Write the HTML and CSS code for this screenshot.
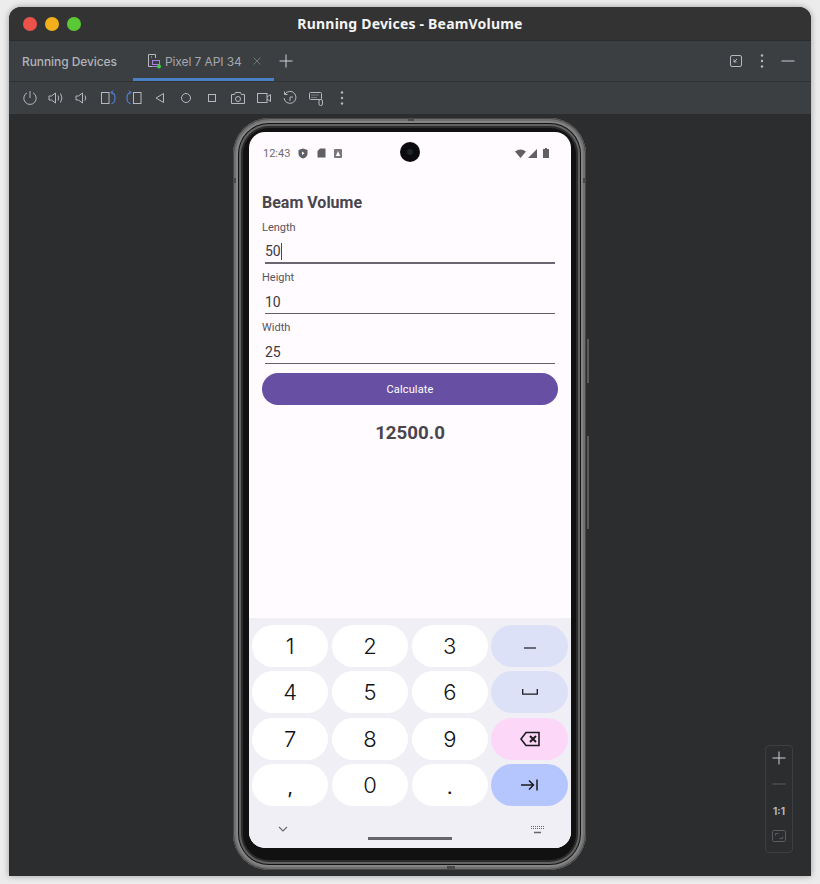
FILE: index.html
```html
<!DOCTYPE html>
<html lang="en">
<head>
    <meta charset="UTF-8">
    <title>Running Devices - BeamVolume</title>
    <link rel="stylesheet" href="styles.css">
</head>
<body>
    <div class="window">
        <header class="titlebar">
            <div class="lights">
                <span class="light red"></span>
                <span class="light yellow"></span>
                <span class="light green"></span>
            </div>
            <div class="title">Running Devices - BeamVolume</div>
        </header>

        <div class="tabbar">
            <span class="tool-name">Running Devices</span>
            <div class="tab">
                <svg width="16" height="16" viewBox="0 0 16 16" fill="none">
                    <path d="M6.500 13.500H2.500V1.500H9.500V5" stroke="#b4b8bf"/>
                    <path d="M5 4h1" stroke="#b4b8bf"/>
                    <rect x="6.500" y="7.500" width="7" height="4" stroke="#a97fe0"/>
                    <path d="M6 13.500h5" stroke="#a97fe0"/>
                    <circle cx="13" cy="13.500" r="2" fill="#3cd23c"/>
                </svg>
                <span class="tab-label">Pixel 7 API 34</span>
                <svg class="tab-close" width="8" height="8" viewBox="0 0 8 8" fill="none">
                    <path d="M0.500 0.500l7 7M7.500 0.500l-7 7" stroke="#6f737a"/>
                </svg>
            </div>
            <svg class="tab-add" width="14" height="14" viewBox="0 0 14 14" fill="none">
                <path d="M7 0.500v13M0.500 7h13" stroke="#ced0d6"/>
            </svg>
            <div class="tab-actions">
                <svg width="14" height="14" viewBox="0 0 14 14" fill="none">
                    <rect x="1.500" y="1.500" width="11" height="11" rx="1.500" stroke="#b4b8bf"/>
                    <path d="M8 5L5 8M5 5.500V8H7.500" stroke="#b4b8bf"/>
                </svg>
                <svg width="14" height="14" viewBox="0 0 14 14" fill="#b4b8bf">
                    <circle cx="7" cy="1.500" r="1.200"/><circle cx="7" cy="7" r="1.200"/><circle cx="7" cy="12.500" r="1.200"/>
                </svg>
                <svg width="14" height="14" viewBox="0 0 14 14" fill="none">
                    <path d="M0.500 7h13" stroke="#9a9ea5" stroke-width="1.300"/>
                </svg>
            </div>
        </div>

        <div class="toolbar">
            <svg width="16" height="16" viewBox="0 0 16 16" fill="none" stroke="#b4b8bf"><path d="M5 2.800a6.200 6.200 0 1 0 6 0M8 1v7"/></svg>
            <svg width="16" height="16" viewBox="0 0 16 16" fill="none" stroke="#b4b8bf"><path d="M1 6h2.500L7.500 3v10L3.500 10H1zM10 5.500q1.500 2.500 0 5M12.500 3.500q3 4.500 0 9"/></svg>
            <svg width="16" height="16" viewBox="0 0 16 16" fill="none" stroke="#b4b8bf"><path d="M2 6h2.500L8.500 3v10L4.500 10H2zM11 5.500q1.500 2.500 0 5"/></svg>
            <svg width="16" height="16" viewBox="0 0 16 16" fill="none"><rect x="1.500" y="2.500" width="7.500" height="11" stroke="#b4b8bf"/><path d="M11.500 2.500c2.500 0 3.500 2.300 3.500 5.500s-1 5.500-3.500 5.500" stroke="#548af7"/><path d="M13 0.500l-2 2 2 2" stroke="#548af7"/></svg>
            <svg width="16" height="16" viewBox="0 0 16 16" fill="none"><rect x="7.500" y="2.500" width="7.500" height="11" stroke="#b4b8bf"/><path d="M4.500 2.500c-2.500 0-3.500 2.300-3.500 5.500s1 5.500 3.500 5.500" stroke="#548af7"/><path d="M3 0.500l2 2-2 2" stroke="#548af7"/></svg>
            <svg width="16" height="16" viewBox="0 0 16 16" fill="none" stroke="#b4b8bf"><path d="M11.500 3.500v9L4 8z"/></svg>
            <svg width="16" height="16" viewBox="0 0 16 16" fill="none" stroke="#b4b8bf"><circle cx="8" cy="8" r="4.500"/></svg>
            <svg width="16" height="16" viewBox="0 0 16 16" fill="none" stroke="#b4b8bf"><rect x="4.500" y="4.500" width="7" height="7"/></svg>
            <svg width="16" height="16" viewBox="0 0 16 16" fill="none" stroke="#b4b8bf"><path d="M1.500 4.500h3l1-2h5l1 2h3v9h-13z"/><circle cx="8" cy="9" r="2.500"/></svg>
            <svg width="16" height="16" viewBox="0 0 16 16" fill="none" stroke="#b4b8bf"><rect x="1.500" y="3.500" width="9.500" height="9"/><path d="M11 7l3.500-2.500v7L11 9"/></svg>
            <svg width="16" height="16" viewBox="0 0 16 16" fill="none" stroke="#b4b8bf"><path d="M3 4a6 6 0 1 1-1 4M2.500 1.500V4.500H5.500M8 11V7h3"/></svg>
            <svg width="16" height="16" viewBox="0 0 16 16" fill="none" stroke="#b4b8bf"><rect x="1.500" y="2.500" width="12" height="7" rx="1"/><path d="M3.500 5h8M3.500 7.500h5" stroke-dasharray="1 1"/><rect x="11" y="9.500" width="3.500" height="6" rx="1.500"/></svg>
            <svg width="16" height="16" viewBox="0 0 16 16" fill="#b4b8bf"><circle cx="8" cy="2.500" r="1.200"/><circle cx="8" cy="8" r="1.200"/><circle cx="8" cy="13.500" r="1.200"/></svg>
        </div>

        <main class="canvas">
            <div class="phone">
                <span class="rocker rocker-power"></span>
                <span class="rocker rocker-volume"></span>
                <span class="notch notch-top"></span>
                <span class="notch notch-bottom"></span>
                <span class="notch notch-left"></span>
                <span class="notch notch-right"></span>
                <div class="screen">
                    <div class="statusbar">
                        <div class="status-left">
                            <span class="clock">12:43</span>
                            <svg width="10" height="11" viewBox="0 0 10 11"><path d="M5 0.500l4.500 1.500v3.500q0 3.500-4.500 5-4.500-1.500-4.500-5V2z" fill="#5f5f64"/><path d="M4 3.500l2.500 1.700L4 7z" fill="#fff"/></svg>
                            <svg width="9" height="10" viewBox="0 0 9 10"><path d="M3 0.500h5.500v9H0.500V3z" fill="#5f5f64"/></svg>
                            <svg width="8" height="9" viewBox="0 0 8 9"><rect width="8" height="9" rx="1" fill="#77777c"/><path d="M4 2l2.200 5H1.800z" fill="#fff"/></svg>
                        </div>
                        <span class="camera"><span class="lens"></span></span>
                        <div class="status-right">
                            <svg width="11" height="9" viewBox="0 0 11 9"><path d="M0 2.500Q5.500-1.500 11 2.500L5.500 9z" fill="#5f5f64"/></svg>
                            <svg class="signal" width="9" height="9" viewBox="0 0 9 9"><path d="M9 0v9H0z" fill="#5f5f64"/></svg>
                            <svg width="6" height="10" viewBox="0 0 6 10"><path d="M2 0h2v1h2v9H0V1h2z" fill="#5f5f64"/></svg>
                        </div>
                    </div>

                    <div class="app">
                        <h1 class="app-title">Beam Volume</h1>

                        <label class="field-label">Length</label>
                        <div class="field field-active"><span>50</span><span class="caret"></span></div>

                        <label class="field-label">Height</label>
                        <div class="field"><span>10</span></div>

                        <label class="field-label">Width</label>
                        <div class="field"><span>25</span></div>

                        <button class="calc-btn">Calculate</button>
                        <p class="result">12500.0</p>
                    </div>

                    <div class="keyboard">
                        <div class="keys">
                            <div class="key">1</div>
                            <div class="key">2</div>
                            <div class="key">3</div>
                            <div class="key key-blue">
                                <svg class="dash" width="12" height="2" viewBox="0 0 12 2"><path d="M0 1h12" stroke="#1c1b1f" stroke-width="1.200"/></svg>
                            </div>
                            <div class="key">4</div>
                            <div class="key">5</div>
                            <div class="key">6</div>
                            <div class="key key-blue">
                                <svg width="16" height="6" viewBox="0 0 16 6" fill="none"><path d="M0.700 0v5.200h14.600V0" stroke="#1c1b1f" stroke-width="1.300"/></svg>
                            </div>
                            <div class="key">7</div>
                            <div class="key">8</div>
                            <div class="key">9</div>
                            <div class="key key-pink">
                                <svg width="20" height="16" viewBox="0 0 20 16" fill="none" stroke="#1c1b1f" stroke-width="1.600"><path d="M6 1.500h13v13H6L1 8z"/><path d="M10 5l6 6M16 5l-6 6" stroke-width="2"/></svg>
                            </div>
                            <div class="key key-low">,</div>
                            <div class="key">0</div>
                            <div class="key key-low">.</div>
                            <div class="key key-indigo">
                                <svg width="17" height="12" viewBox="0 0 17 12" fill="none" stroke="#1c1b1f" stroke-width="1.500"><path d="M0 6h12.500M8 1.500L12.500 6 8 10.500M16 0.500v11"/></svg>
                            </div>
                        </div>
                        <div class="kb-nav">
                            <svg width="10" height="6" viewBox="0 0 10 6" fill="none"><path d="M1 1l4 4 4-4" stroke="#66666b" stroke-width="1.100"/></svg>
                            <span class="gesture-bar"></span>
                            <svg width="13" height="8" viewBox="0 0 13 8" fill="none" stroke="#66666b"><path d="M0 0.500h13M0 2.500h13" stroke-dasharray="1 1"/><path d="M3 6.500h7" stroke-width="1.500"/></svg>
                        </div>
                    </div>
                </div>
            </div>

            <div class="zoom-box">
                <svg width="14" height="14" viewBox="0 0 14 14" fill="none"><path d="M7 0.500v13M0.500 7h13" stroke="#ced0d6"/></svg>
                <svg width="14" height="14" viewBox="0 0 14 14" fill="none"><path d="M0.500 7h13" stroke="#5a5d63"/></svg>
                <span class="zoom-one">1:1</span>
                <svg width="14" height="12" viewBox="0 0 14 12" fill="none" stroke="#5a5d63"><rect x="0.500" y="0.500" width="13" height="11" rx="1"/><path d="M3.500 5.500v-2h3M10.500 6.500v2h-3"/></svg>
            </div>
        </main>
    </div>
</body>
</html>
```

FILE: styles.css
```css
* {
    box-sizing: border-box;
}
body {
    margin: 0;
    height: 884px;
    overflow: hidden;
    background-color: #ececec;
    font-family: Roboto, sans-serif;
}
.window {
    margin: 7px 9px 0;
    height: 869px;
    display: flex;
    flex-direction: column;
    background-color: #2c2d2f;
    border-radius: 12px 12px 0 0;
    overflow: hidden;
    box-shadow: 0 0 6px rgba(0, 0, 0, 0.35);
}

/* title bar */
.titlebar {
    height: 34px;
    flex: none;
    display: flex;
    align-items: center;
    justify-content: center;
    position: relative;
    background-color: #333333;
    border-bottom: 1px solid #2c2c2c;
}
.lights {
    position: absolute;
    left: 14px;
    top: 10px;
    display: flex;
    gap: 8px;
}
.light {
    width: 14px;
    height: 14px;
    border-radius: 50%;
}
.red { background-color: #ed5249; }
.yellow { background-color: #f4b01c; }
.green { background-color: #5bc936; }
.title {
    color: #f4f4f4;
    font-family: "Noto Sans", sans-serif;
    font-weight: 700;
    font-size: 14px;
    letter-spacing: 0.2px;
}

/* tabs */
.tabbar {
    height: 41px;
    flex: none;
    display: flex;
    align-items: center;
    position: relative;
    padding-left: 13px;
    background-color: #3b3f42;
    border-bottom: 1px solid #2f3235;
    font-family: Inter, sans-serif;
    font-size: 12px;
}
.tool-name {
    color: #b0b3b8;
    font-weight: 500;
    letter-spacing: -0.08px;
    width: 111px;
}
.tab {
    width: 141px;
    height: 40px;
    display: flex;
    align-items: center;
    gap: 3px;
    padding-left: 13px;
    border-bottom: 3px solid #4a80c4;
    padding-top: 3px;
    color: #a4a7ad;
}
.tab-label {
    letter-spacing: -0.1px;
    margin-right: 8px;
}
.tab-add {
    margin-left: 5px;
}
.tab-actions {
    margin-left: auto;
    display: flex;
    gap: 12px;
    margin-right: 16px;
}

.toolbar {
    height: 32px;
    flex: none;
    display: flex;
    align-items: center;
    gap: 10px;
    padding-left: 13px;
    background-color: #3b3f42;
}

/* device canvas */
.canvas {
    flex: 1;
    position: relative;
    display: flex;
    justify-content: center;
    padding-top: 4px;
}
.phone {
    width: 353px;
    height: 752px;
    position: relative;
    padding: 14px 15px 22px 16px;
    background-color: #111111;
    border-radius: 36px;
    box-shadow:
        inset 0 0 0 1px #484848,
        inset 0 0 0 3px #707070,
        inset 0 0 0 5px #858585,
        inset 0 0 0 6px #141414,
        inset 0 0 0 8px #626262,
        inset 0 0 0 10px #2c2c2c;
    margin-left: -1px;
}
.rocker {
    position: absolute;
    right: -3px;
    width: 2px;
    background-color: #5a5a5a;
}
.rocker-power {
    top: 221px;
    height: 44px;
}
.rocker-volume {
    top: 318px;
    height: 93px;
}
.notch {
    position: absolute;
    background-color: #4a4a4a;
}
.notch-top {
    top: 0;
    left: 175px;
    width: 6px;
    height: 3px;
}
.notch-bottom {
    bottom: 0;
    left: 214px;
    width: 8px;
    height: 4px;
}
.notch-left {
    top: 60px;
    left: 0;
    width: 3px;
    height: 5px;
}
.notch-right {
    top: 60px;
    right: 0;
    width: 3px;
    height: 5px;
}
.screen {
    position: relative;
    height: 716px;
    display: flex;
    flex-direction: column;
    background-color: #fffbfe;
    border-radius: 16px;
    overflow: hidden;
}

/* status bar */
.statusbar {
    height: 42px;
    flex: none;
    display: flex;
    align-items: center;
    justify-content: space-between;
    position: relative;
    padding: 0 22px 0 14px;
}
.status-left,
.status-right {
    display: flex;
    align-items: center;
}
.status-left {
    gap: 8px;
}
.status-left svg:nth-of-type(2) {
    margin-left: 1px;
}
.status-right {
    gap: 2px;
}
.signal {
    margin-right: 4px;
}
.clock {
    color: #6b6b70;
    font-size: 11px;
    font-weight: 400;
}
.camera {
    position: absolute;
    left: 151px;
    top: 10px;
    width: 20px;
    height: 20px;
    display: flex;
    align-items: center;
    justify-content: center;
    background-color: #0b0b0d;
    border-radius: 50%;
}
.lens {
    width: 6px;
    height: 6px;
    background-color: #1c2329;
    border-radius: 50%;
}

/* app content */
.app {
    flex: 1;
    padding: 19px 13px 0;
    color: #49454f;
}
.app-title {
    margin: 0 0 8px;
    font-size: 16px;
    line-height: 20px;
    font-weight: 700;
}
.field-label {
    display: block;
    font-size: 11px;
    line-height: 13px;
    color: #57545c;
}
.field {
    height: 30px;
    margin: 0 3px 7px;
    padding-top: 7px;
    display: flex;
    align-items: center;
    border-bottom: 1px solid #625f68;
    color: #3c3a41;
    font-size: 14px;
}
.field-active {
    border-bottom: 2px solid #6a6671;
    padding-top: 6px;
}
.caret {
    width: 1px;
    height: 17px;
    background-color: #49454f;
}
.calc-btn {
    display: block;
    width: 100%;
    height: 32px;
    margin-top: 9px;
    color: #ffffff;
    font-family: Roboto, sans-serif;
    font-size: 11px;
    font-weight: 400;
    letter-spacing: 0.15px;
    background-color: #6750a4;
    border: none;
    border-radius: 16px;
}
.result {
    margin: 17px 0 0;
    text-align: center;
    font-size: 18.7px;
    line-height: 22px;
    font-weight: 700;
}

/* keyboard */
.keyboard {
    height: 230px;
    flex: none;
    background-color: #f0eff6;
    padding: 7px 3px 0;
}
.keys {
    display: grid;
    grid-template-columns: repeat(4, 76.3px);
    grid-auto-rows: 42px;
    gap: 4.3px 3.5px;
}
.key {
    display: flex;
    align-items: center;
    justify-content: center;
    background-color: #ffffff;
    border-radius: 21px;
    color: #111114;
    font-family: Inter, sans-serif;
    font-size: 22px;
    font-weight: 300;
}
.key-low {
    align-items: flex-end;
    padding-bottom: 8px;
    font-size: 18px;
    font-weight: 500;
}
.key-blue { background-color: #dce1f7; }
.key-pink { background-color: #fdd7f7; }
.key-indigo { background-color: #b5c6ff; }
.dash {
    margin-top: 3px;
}
.kb-nav {
    height: 38px;
    display: flex;
    justify-content: space-between;
    align-items: flex-start;
    padding: 20px 24px 0 26px;
    position: relative;
}
.gesture-bar {
    position: absolute;
    left: 116px;
    top: 31px;
    width: 84px;
    height: 3px;
    background-color: #66666b;
}

/* zoom controls */
.zoom-box {
    position: absolute;
    right: 18px;
    bottom: 23px;
    width: 28px;
    height: 108px;
    display: flex;
    flex-direction: column;
    align-items: center;
    gap: 12px;
    padding-top: 5px;
    border: 1px solid #3c3e42;
    border-radius: 4px;
    background-color: #2c2d2f;
}
.zoom-one {
    margin-top: 1px;
    color: #b4b8bf;
    font-family: Inter, sans-serif;
    font-size: 10px;
    line-height: 14px;
    font-weight: 700;
}
```
